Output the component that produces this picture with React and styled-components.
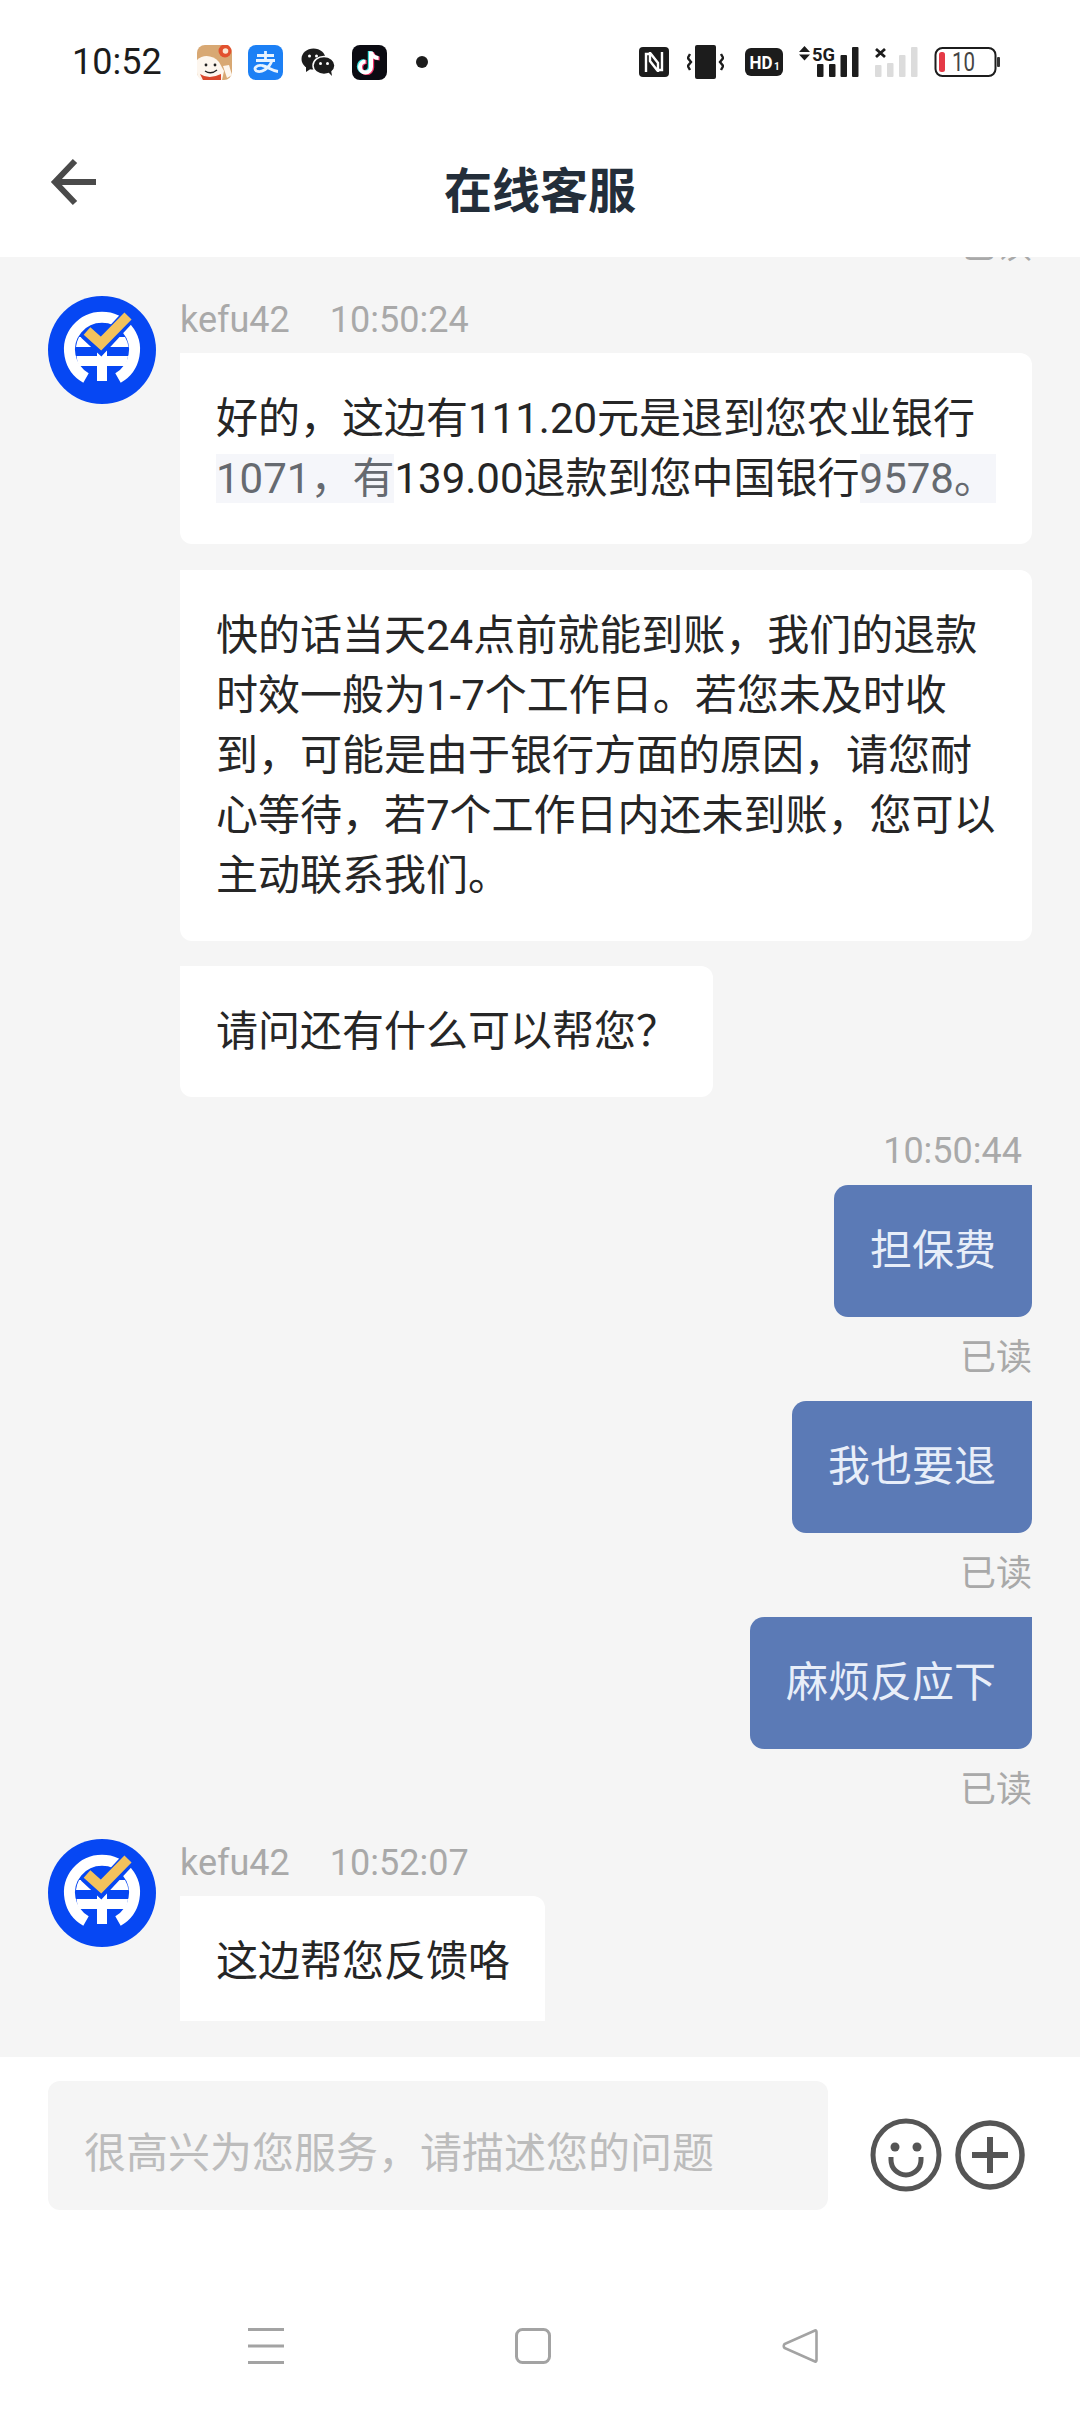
import React from 'react';
import styled, { createGlobalStyle } from 'styled-components';

const Global = createGlobalStyle`
  html, body { margin: 0; padding: 0; background: #fff; }
  * { box-sizing: border-box; }
  body { font-family: Roboto, "Noto Sans CJK SC", sans-serif; }
`;

const Page = styled.div`
  width: 1080px;
  height: 2412px;
  display: flex;
  flex-direction: column;
  background: #fff;
  overflow: hidden;
`;

const StatusBar = styled.div`
  height: 124px;
  flex: none;
  display: flex;
  align-items: center;
  padding: 0 80px 0 72px;
`;
const Clock = styled.div`
  font-size: 36px;
  color: #1c1c1c;
  width: 125px;
`;
const NoticeIcons = styled.div`
  display: flex;
  align-items: center;
  gap: 16px;
`;
const WechatSvg = styled.svg`
  margin: 0 1px 0 2px;
`;
const Dot = styled.span`
  width: 12px;
  height: 12px;
  border-radius: 50%;
  background: #1c1c1c;
  margin-left: 13px;
`;
const SystemIcons = styled.div`
  margin-left: auto;
  display: flex;
  align-items: center;
  gap: 16px;
  margin-top: -1px;
`;
const VibrateSvg = styled.svg`
  margin: 0 5px 0 2px;
`;

const Header = styled.header`
  height: 133px;
  flex: none;
  display: flex;
  align-items: center;
  justify-content: center;
  position: relative;
`;
const BackIcon = styled.svg`
  position: absolute;
  left: 50px;
  top: 33px;
`;
const Title = styled.h1`
  margin: 2px 0 0;
  font-size: 48px;
  font-weight: 700;
  color: #232e3a;
  line-height: 1;
`;

const ChatPanel = styled.main`
  flex: none;
  height: 1800px;
  background: #f5f5f5;
  padding-bottom: 36px;
`;
const Scroller = styled.div`
  height: 100%;
  overflow: hidden;
  display: flex;
  flex-direction: column;
  justify-content: flex-end;
  padding: 0 48px;
`;

const AgentGroup = styled.section`
  display: flex;
  gap: 24px;
  flex: none;
  margin-bottom: ${p => p.$trim || 0}px;
`;
const Avatar = styled.svg`
  flex: none;
  width: 108px;
  height: 108px;
`;
const AgentColumn = styled.div`
  display: flex;
  flex-direction: column;
  align-items: flex-start;
  flex: 1;
  min-width: 0;
`;
const Meta = styled.div`
  display: flex;
  gap: 40px;
  height: 48px;
  line-height: 48px;
  margin-bottom: 9px;
  font-size: 36px;
  color: #a9a9a9;
`;
const AgentBubble = styled.div`
  background: #fff;
  border-radius: ${p => (p.$clipped ? '0 12px 0 0' : '0 12px 12px 12px')};
  padding: 35.5px 35px 35.5px 36px;
  font-size: 42px;
  line-height: 60px;
  color: #262626;
  margin-bottom: ${p => p.$after || 0}px;
`;
const Muted = styled.span`
  background: #f5f6fa;
  color: #666a70;
`;

const Stamp = styled.div`
  flex: none;
  align-self: flex-end;
  font-size: 36px;
  line-height: 48px;
  color: #a9a9a9;
  padding-right: 10px;
  margin: 30px 0 10px;
`;
const OwnBubble = styled.div`
  flex: none;
  align-self: flex-end;
  background: #5b7ab6;
  color: #e8eef9;
  border-radius: 14px 0 14px 14px;
  padding: 36px;
  font-size: 42px;
  line-height: 60px;
`;
const ReadMark = styled.div`
  flex: none;
  align-self: flex-end;
  font-size: 36px;
  line-height: 48px;
  color: #a9a9a9;
  margin: 17px 0 ${p => p.$after}px;
`;

const Footer = styled.footer`
  flex: 1;
  display: flex;
  flex-direction: column;
`;
const InputRow = styled.div`
  display: flex;
  align-items: center;
  padding: 24px 0 0 48px;
`;
const InputBox = styled.div`
  width: 780px;
  height: 129px;
  background: #f5f5f5;
  border-radius: 12px;
  display: flex;
  align-items: center;
  padding: 8px 0 0 36px;
  font-size: 42px;
  color: #bcbcbc;
  margin-right: 42px;
`;
const ActionIcons = styled.div`
  display: flex;
  align-items: center;
  gap: 13px;
  margin-top: 18px;
`;
const NavBar = styled.nav`
  display: flex;
  align-items: center;
  justify-content: space-between;
  width: 570px;
  margin: 118px 0 0 248px;
`;

const AgentLogo = () => (
  <Avatar viewBox="0 0 108 108">
    <circle cx="54" cy="54" r="54" fill="#0647f3" />
    <path d="M38 82 A32.500 32.500 0 1 1 70 82" fill="none" stroke="#fff" strokeWidth="11" />
    <g fill="#fff">
      <path d="M31 41 H77 Q80 46 80.500 51 H28 Q28.500 46 31 41 Z" />
      <path d="M28.500 60 H80 Q79.500 65 77 70 H31 Q29 65 28.500 60 Z" />
    </g>
    <rect x="49" y="50" width="10" height="35" fill="#fff" />
    <polyline points="38,36 53,50 80,21" fill="none" stroke="#0647f3" strokeWidth="15" />
    <polyline points="39,35 53,47.500 80,20" fill="none" stroke="#f3c25c" strokeWidth="10" />
  </Avatar>
);

const JdIcon = () => (
  <svg width="35" height="35" viewBox="0 0 35 35">
    <rect width="35" height="35" rx="8" fill="#d8a873" />
    <path d="M0 15 C6 9 16 10 22 17 L27 26 L25 35 L8 35 C3 35 0 32 0 27 Z" fill="#fdf6ee" />
    <path d="M26 21 L32 20 L35 30 L30 33 Z" fill="#fdf6ee" />
    <circle cx="28" cy="6" r="6.500" fill="#e2512e" />
    <circle cx="28.500" cy="6" r="2.800" fill="#fbe7d2" />
    <circle cx="9" cy="20" r="1.400" fill="#222" /><circle cx="18" cy="20" r="1.400" fill="#222" />
    <path d="M8 26 Q14 30 20 25" fill="none" stroke="#222" strokeWidth="1.300" />
    <path d="M3 29 Q12 35 24 29 L24 35 L6 35 Z" fill="#d9472b" />
  </svg>
);
const AlipayIcon = () => (
  <svg width="35" height="35" viewBox="0 0 35 35">
    <rect width="35" height="35" rx="8" fill="#1c80f5" />
    <path d="M9 10.500 H26 M17.500 6 V15 M8 15.500 H27 M24 15.500 C21 24 13 28 8.500 26 C4.500 23.500 9 19.500 14 20.500 C20 21.500 24 26 30 26.500" fill="none" stroke="#e8f3ff" strokeWidth="2.800" />
  </svg>
);
const WechatIcon = () => (
  <WechatSvg width="34" height="28" viewBox="0 0 34 28">
    <ellipse cx="12.500" cy="11" rx="12" ry="10.500" fill="#1c1c1c" />
    <path d="M5 18 L5 24 L11 20 Z" fill="#1c1c1c" />
    <ellipse cx="23" cy="17.500" rx="11" ry="9" fill="#1c1c1c" stroke="#fff" strokeWidth="1.500" />
    <path d="M27 24 L31 28 L30 22 Z" fill="#1c1c1c" />
    <circle cx="8.500" cy="8" r="1.500" fill="#fff" /><circle cx="15.500" cy="8" r="1.500" fill="#fff" />
    <circle cx="19.500" cy="15.500" r="1.500" fill="#fff" /><circle cx="26.500" cy="15.500" r="1.500" fill="#fff" />
  </WechatSvg>
);
const TiktokNote = ({ color, dx, dy }) => (
  <path transform={`translate(${dx} ${dy})`} d="M19 6.500 V22 A5.500 5.500 0 1 1 13.500 16.500 M19 7 C20 11 23 13 26.500 13" fill="none" stroke={color} strokeWidth="4" />
);
const TiktokIcon = () => (
  <svg width="35" height="35" viewBox="0 0 35 35">
    <rect width="35" height="35" rx="8" fill="#0b0b12" />
    <TiktokNote color="#3fe3e3" dx={-1.2} dy={-0.6} />
    <TiktokNote color="#f5346a" dx={1.2} dy={0.6} />
    <TiktokNote color="#fff" dx={0} dy={0} />
  </svg>
);

const NfcIcon = () => (
  <svg width="30" height="30" viewBox="0 0 30 30">
    <rect width="30" height="30" rx="4" fill="#1c1c1c" />
    <path d="M7 25 V7 H12 L19 16 V25 M23 5 V23 H18 L11 14 V5" fill="none" stroke="#fff" strokeWidth="2.400" />
  </svg>
);
const VibrateIcon = () => (
  <VibrateSvg width="37" height="34" viewBox="0 0 37 34">
    <rect x="8" y="0" width="21" height="34" rx="2" fill="#1c1c1c" />
    <path d="M3 9 L0.800 13 L4 17 L0.800 21 L3 25 M34 9 L36.200 13 L33 17 L36.200 21 L34 25" fill="none" stroke="#1c1c1c" strokeWidth="2.400" />
  </VibrateSvg>
);
const HdIcon = () => (
  <svg width="38" height="28" viewBox="0 0 38 28">
    <rect width="38" height="28" rx="6" fill="#1c1c1c" />
    <text x="4.500" y="21" fontFamily="Roboto, sans-serif" fontWeight="700" fontSize="19" fill="#fff" textLength="23" lengthAdjust="spacingAndGlyphs">HD</text>
    <text x="29" y="22" fontFamily="Roboto, sans-serif" fontWeight="700" fontSize="10" fill="#fff">1</text>
  </svg>
);
const SignalPrimary = () => (
  <svg width="60" height="40" viewBox="0 -4 60 40">
    <path d="M0 6 L5.500 0 L11 6 Z M0 8.500 L5.500 14.500 L11 8.500 Z" fill="#1c1c1c" />
    <text x="13" y="14.500" fontFamily="Roboto, sans-serif" fontWeight="700" fontSize="18" fill="#1c1c1c" textLength="23" lengthAdjust="spacingAndGlyphs">5G</text>
    <rect x="18" y="18" width="6.500" height="13" rx="1" fill="#1c1c1c" />
    <rect x="30" y="18" width="6.500" height="13" rx="1" fill="#1c1c1c" />
    <rect x="41.500" y="9" width="6.500" height="22" rx="1" fill="#1c1c1c" />
    <rect x="53" y="1" width="6.500" height="30" rx="1" fill="#1c1c1c" />
  </svg>
);
const SignalSecondary = () => (
  <svg width="43" height="32" viewBox="0 0 43 32">
    <path d="M1 3 L10 11 M10 3 L1 11" stroke="#1c1c1c" strokeWidth="2.800" />
    <rect x="0" y="19" width="6.500" height="12" rx="1" fill="#dcdcdc" />
    <rect x="12" y="17" width="6.500" height="14" rx="1" fill="#dcdcdc" />
    <rect x="24" y="9" width="6.500" height="22" rx="1" fill="#dcdcdc" />
    <rect x="36" y="1" width="6.500" height="30" rx="1" fill="#dcdcdc" />
  </svg>
);
const BatteryIcon = () => (
  <svg width="66" height="32" viewBox="0 0 66 32">
    <rect x="1.500" y="2" width="60" height="28" rx="7" fill="#fff" stroke="#1c1c1c" strokeWidth="2" />
    <rect x="5" y="6" width="6" height="20" rx="2.500" fill="#e53a47" />
    <text x="18" y="25" fontFamily="Roboto, sans-serif" fontSize="26" fill="#444" textLength="23" lengthAdjust="spacingAndGlyphs">10</text>
    <rect x="63" y="11" width="3" height="10" rx="1" fill="#333" />
  </svg>
);

const SmileIcon = () => (
  <svg width="72" height="74" viewBox="0 0 72 74">
    <ellipse cx="36" cy="37" rx="33" ry="34" fill="none" stroke="#555" strokeWidth="5" />
    <circle cx="25" cy="29" r="4.500" fill="#555" />
    <circle cx="47" cy="29" r="4.500" fill="#555" />
    <path d="M21 39 V42 A15 15 0 0 0 51 42 V39" fill="none" stroke="#555" strokeWidth="5" />
  </svg>
);
const PlusIcon = () => (
  <svg width="70" height="70" viewBox="0 0 70 70">
    <circle cx="35" cy="35" r="32" fill="none" stroke="#555" strokeWidth="5.500" />
    <path d="M17 35 H53 M35 17 V53" stroke="#555" strokeWidth="6" />
  </svg>
);
const MenuIcon = () => (
  <svg width="36" height="36" viewBox="0 0 36 36">
    <path d="M0 1.500 H36 M0 18 H36 M0 34.500 H36" stroke="#a3a3a3" strokeWidth="3" />
  </svg>
);
const HomeIcon = () => (
  <svg width="36" height="36" viewBox="0 0 36 36">
    <rect x="1.500" y="1.500" width="33" height="33" rx="6" fill="none" stroke="#a3a3a3" strokeWidth="3" />
  </svg>
);
const TriangleIcon = () => (
  <svg width="36" height="36" viewBox="0 0 36 36">
    <path d="M33 2.500 Q34.500 2 34.500 4 V32 Q34.500 34 33 33.500 L2.500 20 Q1 18 2.500 16 Z" fill="none" stroke="#a3a3a3" strokeWidth="2.600" />
  </svg>
);

const AgentMessage = ({ time, trim, children }) => (
  <AgentGroup $trim={trim}>
    <AgentLogo />
    <AgentColumn>
      <Meta><span>kefu42</span><span>{time}</span></Meta>
      {children}
    </AgentColumn>
  </AgentGroup>
);

const OwnMessage = ({ after, children }) => (
  <>
    <OwnBubble>{children}</OwnBubble>
    <ReadMark $after={after}>已读</ReadMark>
  </>
);

export default function App() {
  return (
    <Page>
      <Global />
      <StatusBar>
        <Clock>10:52</Clock>
        <NoticeIcons>
          <JdIcon /><AlipayIcon /><WechatIcon /><TiktokIcon />
          <Dot />
        </NoticeIcons>
        <SystemIcons>
          <NfcIcon /><VibrateIcon /><HdIcon /><SignalPrimary /><SignalSecondary /><BatteryIcon />
        </SystemIcons>
      </StatusBar>
      <Header>
        <BackIcon width="48" height="50" viewBox="0 0 48 50" fill="none">
          <path d="M46 25 H5 M25 4 L5 25 L25 46" stroke="#4a4a4a" strokeWidth="6" />
        </BackIcon>
        <Title>在线客服</Title>
      </Header>
      <ChatPanel>
        <Scroller>
          <ReadMark $after={26}>已读</ReadMark>
          <AgentMessage time="10:50:24">
            <AgentBubble $after={26}>
              好的，这边有111.20元是退到您农业银行<Muted>1071，有</Muted>139.00退款到您中国银行<Muted>9578。</Muted>
            </AgentBubble>
            <AgentBubble $after={25}>
              快的话当天24点前就能到账，我们的退款时效一般为1-7个工作日。若您未及时收到，可能是由于银行方面的原因，请您耐心等待，若7个工作日内还未到账，您可以主动联系我们。
            </AgentBubble>
            <AgentBubble>请问还有什么可以帮您？</AgentBubble>
          </AgentMessage>
          <Stamp>10:50:44</Stamp>
          <OwnMessage after={19}>担保费</OwnMessage>
          <OwnMessage after={19}>我也要退</OwnMessage>
          <OwnMessage after={25}>麻烦反应下</OwnMessage>
          <AgentMessage time="10:52:07" trim={-6}>
            <AgentBubble $clipped>这边帮您反馈咯</AgentBubble>
          </AgentMessage>
        </Scroller>
      </ChatPanel>
      <Footer>
        <InputRow>
          <InputBox>很高兴为您服务，请描述您的问题</InputBox>
          <ActionIcons><SmileIcon /><PlusIcon /></ActionIcons>
        </InputRow>
        <NavBar>
          <MenuIcon /><HomeIcon /><TriangleIcon />
        </NavBar>
      </Footer>
    </Page>
  );
}
